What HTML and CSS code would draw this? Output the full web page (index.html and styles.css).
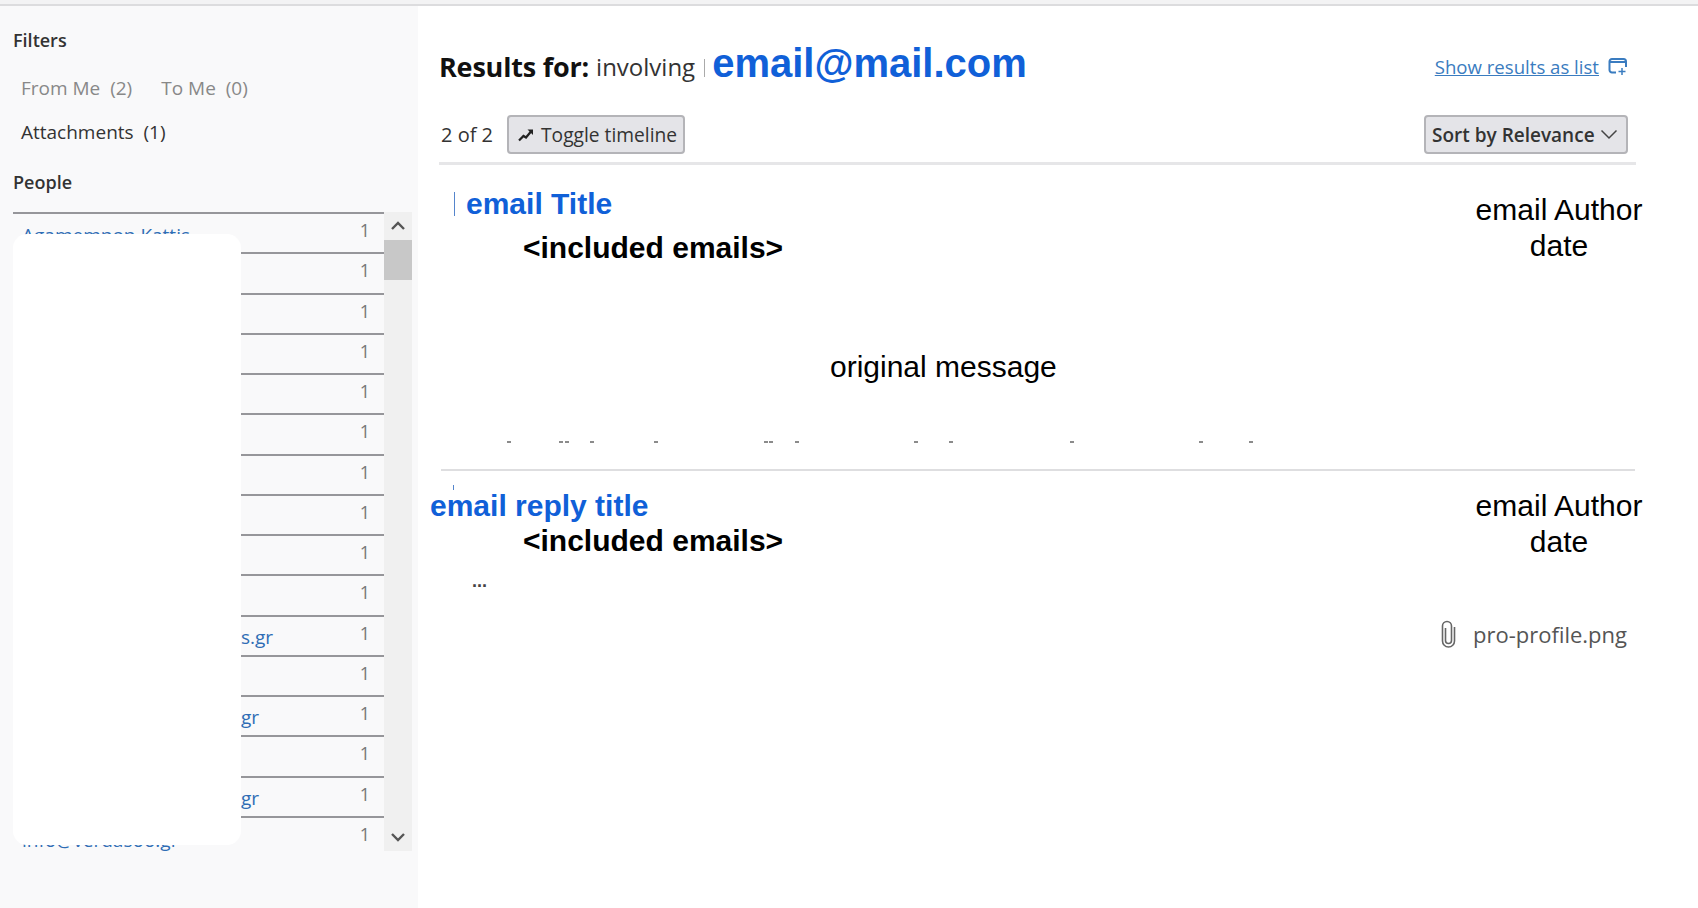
FILE: index.html
```html
<!DOCTYPE html>
<html lang="en">
<head>
<meta charset="utf-8">
<title>Search results</title>
<link rel="stylesheet" href="styles.css">
</head>
<body>
<div class="topbar"></div>
<div class="app">
  <aside class="sidebar">
    <h2 class="side-title filters-title">Filters</h2>
    <div class="filter-line dim"><span>From Me&nbsp; (2)</span><span>To Me&nbsp; (0)</span></div>
    <div class="filter-line">Attachments&nbsp; (1)</div>
    <h2 class="side-title people-title">People</h2>
    <div class="people">
      <ul class="people-list">
        <li><a class="name">Agamemnon Kattis</a><span class="count">1</span></li>
        <li><a class="name"></a><span class="count">1</span></li>
        <li><a class="name"></a><span class="count">1</span></li>
        <li><a class="name"></a><span class="count">1</span></li>
        <li><a class="name"></a><span class="count">1</span></li>
        <li><a class="name"></a><span class="count">1</span></li>
        <li><a class="name"></a><span class="count">1</span></li>
        <li><a class="name"></a><span class="count">1</span></li>
        <li><a class="name"></a><span class="count">1</span></li>
        <li><a class="name"></a><span class="count">1</span></li>
        <li><a class="name tail">s.gr</a><span class="count">1</span></li>
        <li><a class="name"></a><span class="count">1</span></li>
        <li><a class="name tail">gr</a><span class="count">1</span></li>
        <li><a class="name"></a><span class="count">1</span></li>
        <li><a class="name tail">gr</a><span class="count">1</span></li>
        <li><a class="name">info@verdasoo.gr</a><span class="count">1</span></li>
      </ul>
      <div class="scrollbar">
        <svg class="arrow" width="28" height="28" viewBox="0 0 28 28"><path d="M8 17l6-6 6 6" fill="none" stroke="#555" stroke-width="2.4"/></svg>
        <div class="thumb"></div>
        <svg class="arrow arrow-down" width="28" height="28" viewBox="0 0 28 28"><path d="M8 11l6 6 6-6" fill="none" stroke="#555" stroke-width="2.4"/></svg>
      </div>
      <div class="mask"></div>
    </div>
  </aside>

  <main class="results">
    <header class="head">
      <div class="query">
        <strong class="q-label">Results for:</strong>
        <span class="q-word">involving</span>
        <span class="q-bar"></span>
        <span class="q-mail">email@mail.com</span>
        <a class="as-list">Show results as list</a>
        <svg class="list-icon" width="20" height="18" viewBox="0 0 20 18"><path d="M8 15.500H4a2.500 2.500 0 0 1-2.500-2.500V4.500A2.500 2.500 0 0 1 4 2h11.500A2.500 2.500 0 0 1 18 4.500V10" fill="none" stroke="#3a7cc0" stroke-width="2"/><path d="M2 5h16" stroke="#3a7cc0" stroke-width="2"/><path d="M14 11v7M10.500 14.500h7" stroke="#3a7cc0" stroke-width="1.500"/></svg>
      </div>
      <div class="tools">
        <span class="pager">2 of 2</span>
        <button class="btn toggle" type="button">
          <svg class="toggle-icon" width="16" height="14" viewBox="0 0 16 14"><path d="M1 12.500l4.500-4.500 2.500 1.500 5-6" fill="none" stroke="#222" stroke-width="2.200"/><path d="M9.500 1.500h5.500v5.500z" fill="#222"/></svg>
          <span>Toggle timeline</span>
        </button>
        <button class="btn sort" type="button">
          <span>Sort by Relevance</span>
          <svg width="18" height="11" viewBox="0 0 18 11"><path d="M1.500 1.500L9 9l7.500-7.500" fill="none" stroke="#444" stroke-width="1.500"/></svg>
        </button>
      </div>
    </header>

    <section class="msg first">
      <div class="msg-main">
        <div class="title-row"><span class="tick"></span><h3 class="msg-title">email Title</h3></div>
        <p class="included">&lt;included emails&gt;</p>
      </div>
      <div class="author">email Author<br>date</div>
      <p class="original">original message</p>
      <svg class="specks" width="780" height="2" viewBox="0 0 780 2"><path d="M0 1h4M52 1h4M58 1h4M83 1h4M147 1h4M257 1h4M262 1h4M288 1h4M407 1h4M442 1h4M563 1h4M692 1h4M742 1h4" stroke="#666" stroke-width="1.500"/></svg>
    </section>

    <hr class="sep">

    <section class="msg second">
      <span class="mini-tick"></span>
      <div class="msg-main">
        <h3 class="msg-title">email reply title</h3>
        <p class="included">&lt;included emails&gt;</p>
        <p class="ellipsis">...</p>
      </div>
      <div class="author">email Author<br>date</div>
      <div class="attachment">
        <svg width="15" height="28" viewBox="0 0 15 28"><path d="M4.500 8v12.500a3 3 0 0 0 6 0V6a4.500 4.500 0 0 0-9 0v15a6 6 0 0 0 12 0V7" fill="none" stroke="#666" stroke-width="1.600"/></svg>
        <span>pro-profile.png</span>
      </div>
    </section>
  </main>
</div>
</body>
</html>
```
FILE: styles.css
```css
* { box-sizing: border-box; }
html, body { margin: 0; height: 100%; }
body { background: #fff; overflow: hidden; font-family: "Open Sans", "Noto Sans", sans-serif; color: #333; }

.topbar { height: 6px; background: #f3f3f4; border-bottom: 2px solid #dcdcde; }
.app { display: flex; height: 902px; }

/* sidebar */
.sidebar { width: 418px; flex: none; background: #f9f9fa; padding: 24px 6px 0 13px; }
.side-title { margin: 0; font-size: 18px; line-height: 20px; font-weight: 600; color: #333; }
.people-title { margin-top: 30px; }
.filter-line { display: flex; gap: 29px; margin: 24px 0 0 8px; font-size: 19px; line-height: 20px; color: #333; }
.filters-title + .filter-line { margin-top: 28px; }
.dim { color: #888; }

.people { position: relative; display: flex; height: 639px; margin-top: 20px; }
.people-list { flex: 1; margin: 0; padding: 0; list-style: none; overflow: hidden; }
.people-list li { display: flex; justify-content: space-between; height: 40.25px; border-top: 2px solid #96969a; padding: 0 14px 0 9px; }
.name { font-size: 19px; line-height: 24px; padding-top: 8px; color: #2f6db5; }
.people-list li:first-child .name { padding-top: 9px; }
.people-list li:last-child .name { padding-top: 10px; }
.tail { padding-left: 219px; }
.count { font-size: 18px; line-height: 22px; padding-top: 5px; color: #777; }

.scrollbar { display: flex; flex-direction: column; width: 28px; background: #f0f0f0; }
.arrow { flex: none; height: 28px; }
.arrow-down { margin-top: auto; }
.thumb { height: 40px; background: #c8c8c8; }
.mask { position: absolute; left: 0; top: 22px; width: 228px; height: 611px; background: #fff; border-radius: 14px; }

/* results */
.results { flex: 1; padding: 0 49px 0 12px; }
.head { margin: 0 13px 0 9px; padding-bottom: 8px; border-bottom: 3px solid #e6e6e8; }
.query { display: flex; align-items: center; height: 48px; margin-top: 36px; }
.q-label { font-size: 27px; font-weight: 700; letter-spacing: -0.2px; color: #111; }
.q-word { margin-left: 7px; font-size: 24px; color: #333; }
.q-bar { width: 1px; height: 18px; margin: 4px 7px 0 9px; background: #aaa; }
.q-mail { position: relative; top: -3px; font-family: "Liberation Sans", Arial, sans-serif; font-size: 40px; font-weight: 700; color: #1060d8; }
.as-list { margin-left: auto; font-size: 18.6px; color: #3a7cc0; text-decoration: underline; }
.list-icon { margin: 0 8px 0 9px; }

.tools { display: flex; align-items: center; gap: 14px; margin-top: 25px; padding-left: 2px; }
.pager { font-size: 20px; color: #333; }
.btn { display: flex; align-items: center; height: 39px; border: 2px solid #b4b4b8; border-radius: 4px; background: #e4e4e8; font-family: inherit; font-size: 19px; font-weight: 600; color: #333; white-space: nowrap; }
.toggle { gap: 7px; width: 178px; padding: 0 0 0 9px; font-size: 19.2px; font-weight: 500; }
.toggle-icon { flex: none; }
.sort { justify-content: space-between; width: 204px; margin: 0 8px 0 auto; padding: 0 8px 0 6px; }

.msg { position: relative; display: grid; grid-template-columns: 1fr 180px; font-family: "Liberation Sans", Arial, sans-serif; color: #000; }
.first { height: 304px; }
.msg-title { margin: 0; font-size: 30px; line-height: 34px; font-weight: 700; color: #1060d8; }
.title-row { display: flex; align-items: center; gap: 11px; padding: 0 0 0 24px; }
.tick { width: 1px; height: 24px; background: #5585cc; }
.included { margin: 0; padding-left: 93px; font-size: 30px; line-height: 34px; font-weight: 700; }
.author { font-size: 30px; line-height: 36px; text-align: center; }
.first .msg-main { padding-top: 22px; }
.first .author { padding-top: 27px; }
.first .included { margin-top: 10px; }
.original { grid-column: 1 / -1; margin: 59px 0 0 400px; font-size: 30px; line-height: 34px; }
.specks { grid-column: 1 / -1; margin: 32px 0 0 77px; }

.sep { height: 2px; margin: 0 14px 0 11px; border: 0; background: #dedee0; }

.second .msg-main { padding-top: 18px; }
.second .included { margin-top: 1px; }
.second .author { padding-top: 17px; }
.mini-tick { position: absolute; left: 23px; top: 14px; width: 1px; height: 5px; background: #5585cc; }
.ellipsis { margin: 13px 0 0 42px; font-size: 18px; font-weight: 700; line-height: 20px; color: #444; }
.attachment { grid-column: 1 / -1; justify-self: end; display: flex; align-items: center; gap: 17px; margin: 28px 22px 0 0; font-family: "Open Sans", sans-serif; font-size: 22px; color: #555; }
```
